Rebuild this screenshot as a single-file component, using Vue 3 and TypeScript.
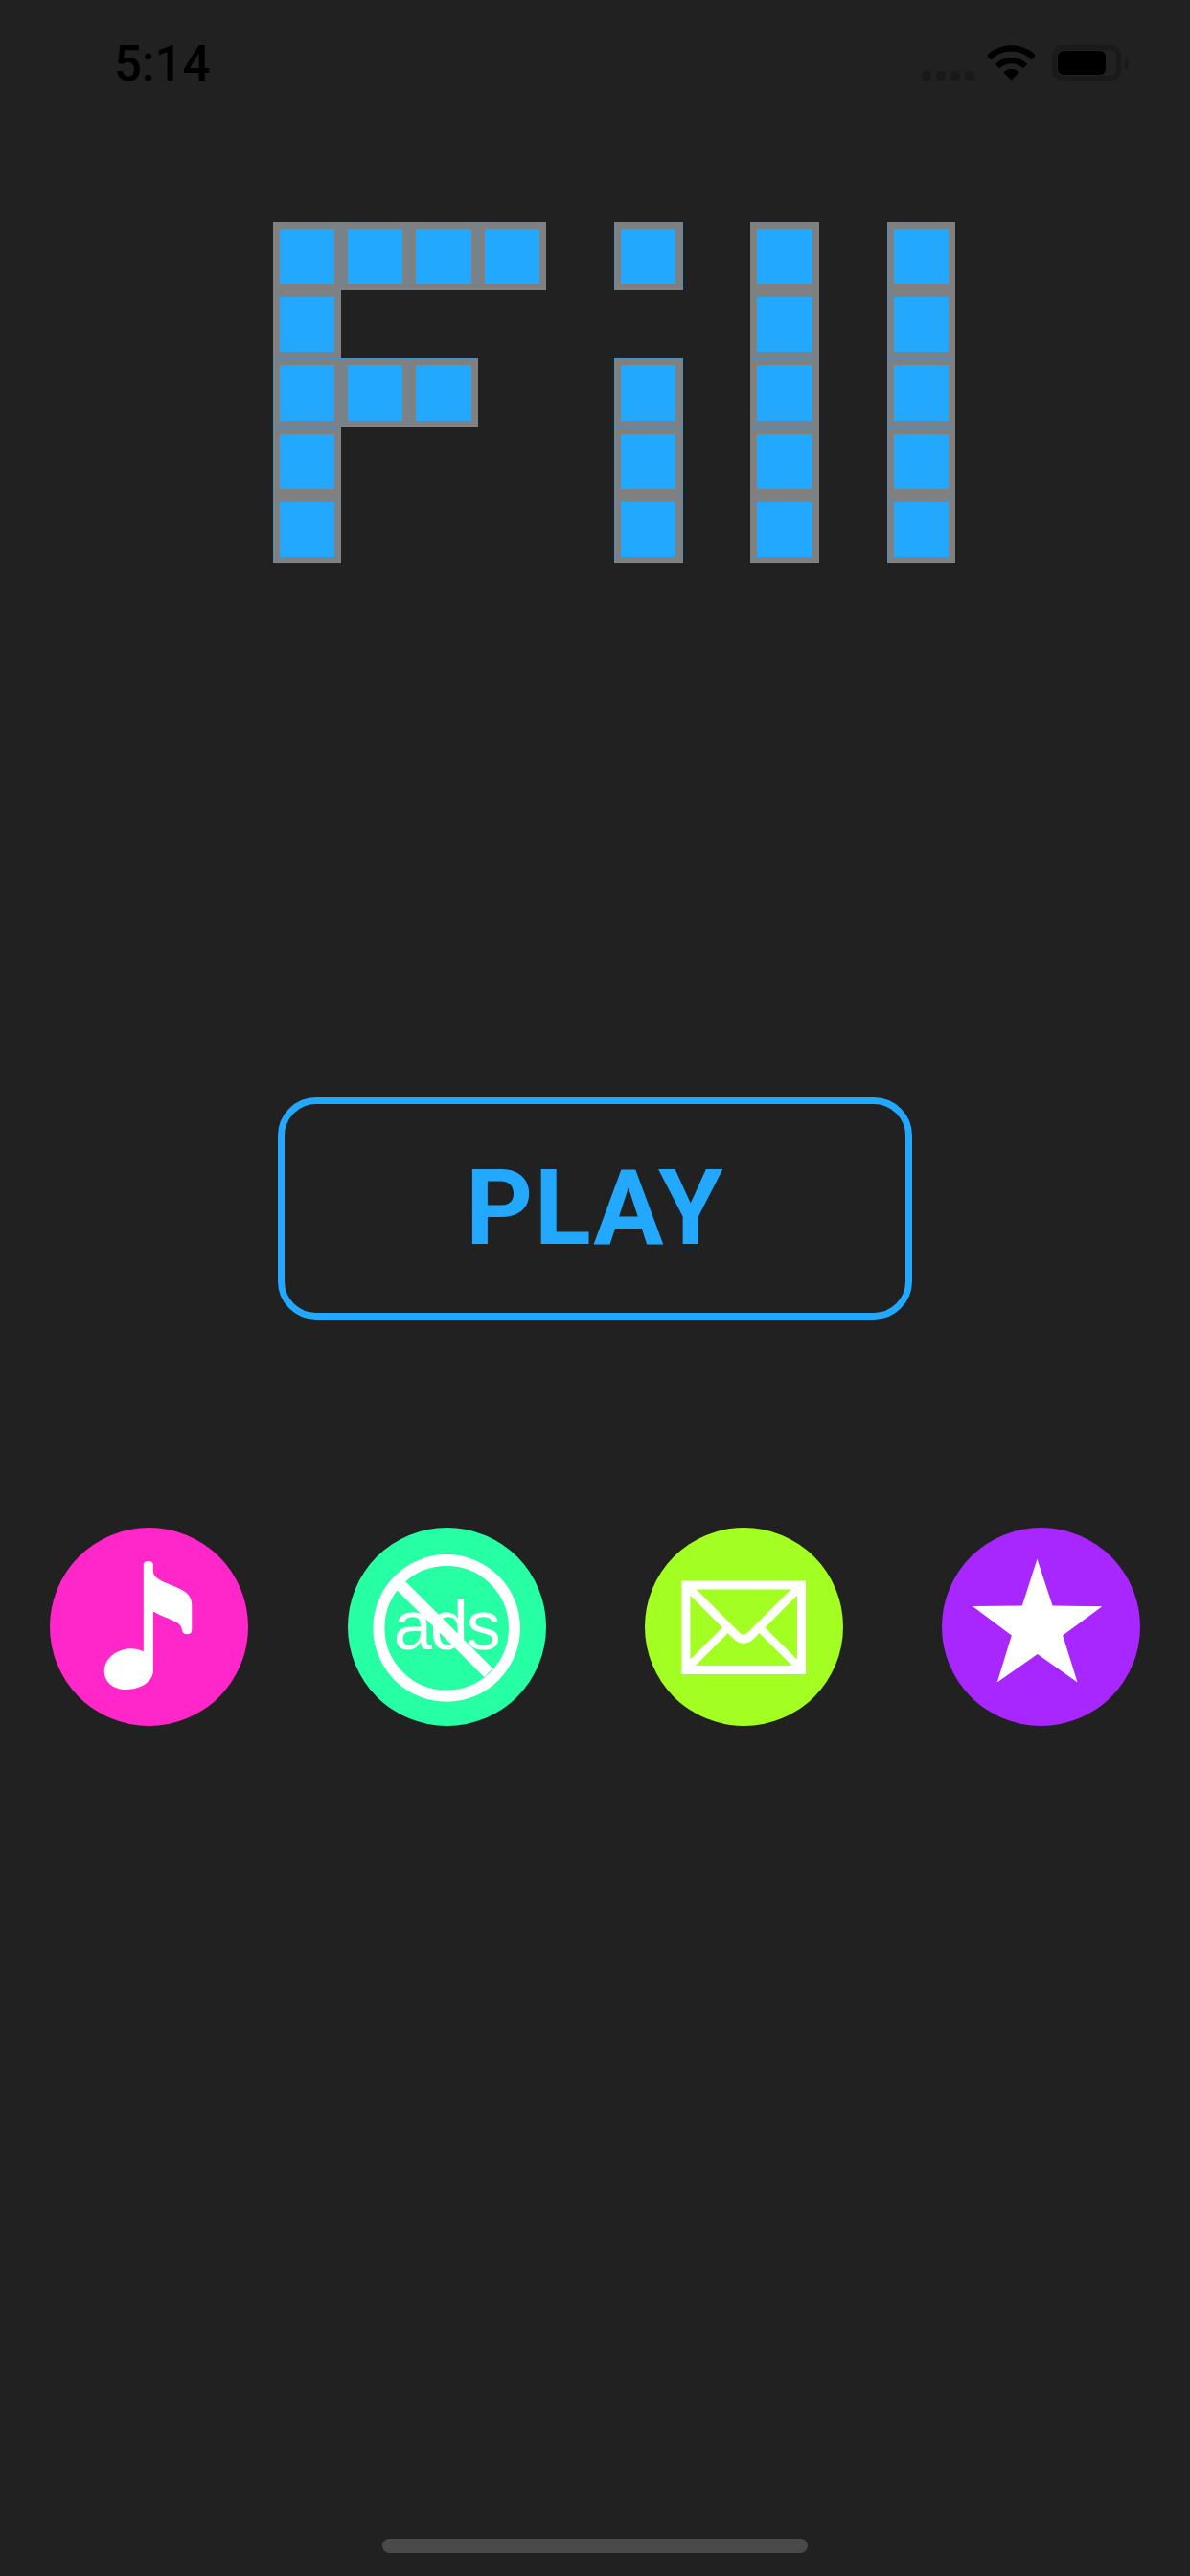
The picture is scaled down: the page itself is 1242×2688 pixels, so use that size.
<script setup lang="ts">
// 10 x 5 pixel letters spelling the logo, "#" is a filled cell
const logoRows: string[] = [
  "####.#.#.#",
  "#......#.#",
  "###..#.#.#",
  "#....#.#.#",
  "#....#.#.#",
];

// the blue fill peeks through at some cell edges
function cellClass(row: number, col: number) {
  return {
    cell: true,
    "seam-top": row >= 2,
    "seam-left": [1, 2, 3, 5, 9].includes(col) || (col === 0 && row >= 2),
    "seam-right": col === 5,
  };
}

const signalDots = [0, 1, 2, 3];
</script>

<template>
  <div class="screen">
    <div class="status">
      <span class="time">5:14</span>
      <div class="status-right">
        <div class="signal">
          <i v-for="d in signalDots" :key="d" class="dot"></i>
        </div>
        <svg class="wifi" viewBox="305 82 148 110">
          <path d="M308 121A100 100 0 0 1 450 121" fill="none" stroke="#000" stroke-width="19" />
          <path d="M335 148A62 62 0 0 1 423 148" fill="none" stroke="#000" stroke-width="19" />
          <path d="M379 192L354 167A35 35 0 0 1 404 167Z" fill="#000" />
        </svg>
        <div class="battery"><div class="battery-level"></div></div>
        <div class="battery-nub"></div>
      </div>
    </div>

    <div class="logo">
      <template v-for="(line, r) in logoRows" :key="r">
        <template v-for="(c, i) in line.split('')" :key="i">
          <div v-if="c === '#'" :class="cellClass(r, i)"></div>
          <div v-else></div>
        </template>
      </template>
    </div>

    <button class="play">PLAY</button>

    <div class="actions">
      <div class="round pink">
        <svg viewBox="37 43 620 620">
          <path
            d="M330 160Q330 148 345 148Q360 148 360 160V180C362 205 400 215 430 228C465 243 481 258 481 285V362Q481 376 466 376Q452 376 450 362C448 345 435 338 410 328C390 320 375 314 360 305V490C360 525 320 549 275 549C235 549 207 525 207 492C207 450 250 421 290 421C305 421 318 424 330 430Z"
            fill="#fff"
          />
        </svg>
      </div>
      <div class="round green">
        <svg viewBox="38 43 620 620">
          <text x="346" y="423" text-anchor="middle" class="ads">ads</text>
          <circle cx="347" cy="357" r="212" fill="none" stroke="#fff" stroke-width="36" />
          <path d="M205 225L478 497" stroke="#fff" stroke-width="38" />
        </svg>
      </div>
      <div class="round lime">
        <svg viewBox="40 43 620 620">
          <g fill="none" stroke="#fff">
            <rect x="168.5" y="222.5" width="361" height="265" stroke-width="27" />
            <path d="M170 224L326 380Q349 403 372 380L528 224" stroke-width="27" />
            <path d="M170 485L292 363M528 485L406 363" stroke-width="25" />
          </g>
        </svg>
      </div>
      <div class="round purple">
        <svg viewBox="40 43 620 620">
          <polygon
            points="338,141 386,287 541,289 418,380 464,527 339,438 213,527 258,380 136,289 291,287"
            fill="#fff"
          />
        </svg>
      </div>
    </div>

    <div class="home-bar"></div>
  </div>
</template>

<style scoped>
.screen {
  width: 1242px;
  height: 2688px;
  overflow: hidden;
  background: #212121;
  display: flex;
  flex-direction: column;
}

.status {
  height: 100px;
  flex: none;
  display: flex;
  justify-content: space-between;
  align-items: flex-start;
  padding: 0 64px 0 119px;
  box-sizing: border-box;
}
.time {
  font-family: Roboto, sans-serif;
  font-weight: 500;
  font-size: 51px;
  line-height: 58px;
  margin-top: 38px;
  color: #000;
}
.status-right {
  display: flex;
  align-items: center;
  margin-top: 47px;
  height: 37px;
}
.signal {
  display: flex;
  gap: 5px;
  align-self: flex-end;
  margin-right: 14px;
}
.dot {
  width: 10px;
  height: 10px;
  border-radius: 4px;
  background: #191919;
}
.wifi {
  width: 49px;
  height: 37px;
  margin-right: 18px;
}
.battery {
  width: 72px;
  height: 37px;
  box-sizing: border-box;
  border: 5px solid #1a1a1a;
  border-radius: 11px;
  padding: 1px;
}
.battery-level {
  width: 50px;
  height: 25px;
  background: #000;
  border-radius: 6px;
}
.battery-nub {
  width: 4px;
  height: 12px;
  margin-left: 4px;
  background: #1a1a1a;
  border-radius: 0 4px 4px 0;
}

.logo {
  margin: 132px 0 0 285px;
  width: 712px;
  height: 356px;
  flex: none;
  display: grid;
  grid-template-columns: repeat(10, 71.2px);
  grid-template-rows: repeat(5, 71.2px);
}
.cell {
  position: relative;
  background: #23a8ff;
  border: 7px solid #808080;
}
.seam-top::before,
.seam-left::after {
  content: "";
  position: absolute;
  top: -7px;
  left: -7px;
  background: #4e8eb9;
}
.seam-top::before {
  right: -7px;
  height: 1px;
}
.seam-left::after {
  bottom: -7px;
  width: 1px;
}
.seam-right {
  box-shadow: 1px 0 0 #4e8eb9;
}

.play {
  margin: 557px auto 0;
  width: 662px;
  height: 232px;
  flex: none;
  box-sizing: border-box;
  background: none;
  border: 7px solid #23a8ff;
  border-radius: 40px;
  padding: 0;
  color: #23a8ff;
  font-family: Roboto, sans-serif;
  font-weight: 700;
  font-size: 109px;
  letter-spacing: 1.5px;
  line-height: 1;
}

.actions {
  margin-top: 217px;
  padding-left: 52.3px;
  display: flex;
  gap: 103.33px;
  flex: none;
}
.round {
  width: 207px;
  height: 207px;
  border-radius: 50%;
}
.round svg {
  display: block;
  width: 100%;
  height: 100%;
}
.pink {
  background: #ff27c9;
}
.green {
  background: #27ffa5;
}
.lime {
  background: #a3ff22;
}
.purple {
  background: #a827ff;
}
.ads {
  font-family: "Liberation Sans", sans-serif;
  font-size: 215px;
  letter-spacing: -6px;
  fill: #fff;
}

.home-bar {
  margin: 848px auto 0;
  width: 444px;
  height: 15px;
  flex: none;
  border-radius: 8px;
  background: #4a4a4a;
}
</style>

<style>
body {
  background: #212121;
}
</style>
